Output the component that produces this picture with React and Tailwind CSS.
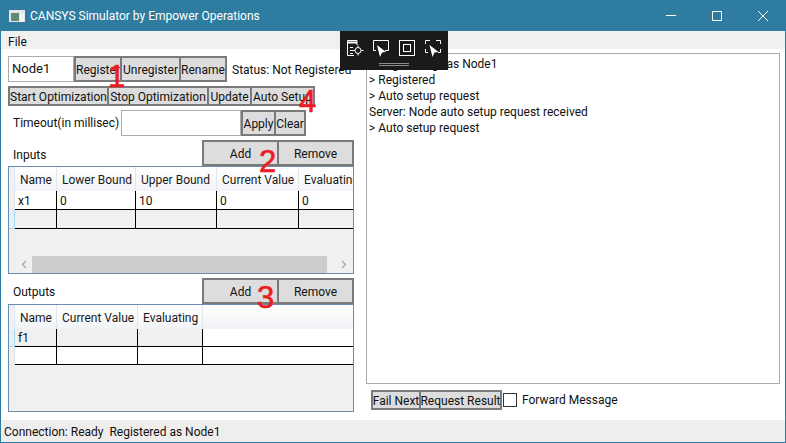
import React from 'react';

const font = "font-['Roboto',sans-serif]";

const Btn = ({ className = '', children }) => (
  <button className={`shrink-0 flex items-center justify-center pt-px bg-[#dddddd] border-2 border-[#7a7a7a] text-[12px] leading-none text-[#111] whitespace-nowrap ${className}`}>
    {children}
  </button>
);

const Mark = ({ className = '', children }) => (
  <span className={`absolute font-['Liberation_Sans',sans-serif] text-[31px] leading-none text-[#ed1c24] [-webkit-text-stroke:0.6px_#ed1c24] ${className}`}>
    {children}
  </span>
);

const DataGrid = ({ columns, rows, tint, scroll, rowClass, className = '' }) => (
  <div className={`relative flex flex-col h-[108px] bg-[#f0f0f0] border border-[#688caf] overflow-hidden ${className}`}>
    <div className="flex items-stretch shrink-0 h-[24px]">
      <div className="w-[6px] shrink-0 bg-[#eef1f5] border-r border-[#e3e6ea]" />
      {columns.map((c) => (
        <div
          key={c.name}
          style={{ width: c.w }}
          className="shrink-0 flex items-center pl-[5px] pt-[2px] bg-gradient-to-b from-white to-[#f1f3f6] border-r border-[#e3e6ea] text-[12px] text-[#1a1a1a] whitespace-nowrap overflow-hidden"
        >
          {c.name}
        </div>
      ))}
      <div className="flex-1 bg-gradient-to-b from-white to-[#f1f3f6]" />
    </div>
    {rows.map((r, i) => (
      <div key={i} className={`flex shrink-0 text-[12px] text-[#111] ${rowClass}`}>
        <div className={`w-[6px] shrink-0 border-b border-r ${i === tint.selector ? 'bg-[#e3f1fb] border-[#a8d4f0]' : 'bg-[#f0f0f0] border-[#e3e6ea]'}`} />
        {columns.map((c, j) => (
          <div
            key={c.name}
            style={{ width: c.w }}
            className={`shrink-0 flex items-center pl-[3px] pt-px border-b border-r border-black ${i === tint.row ? 'bg-[#f0f0f0]' : 'bg-white'}`}
          >
            {r[j]}
          </div>
        ))}
        <div className={`flex-1 border-b border-black ${scroll ? 'bg-[#f0f0f0]' : 'bg-white'}`} />
      </div>
    ))}
    {scroll && (
      <div className="absolute left-0 right-0 bottom-0 h-[17px] flex items-center bg-[#f0f0f0]">
        <svg width="23" height="17" viewBox="0 0 23 17" className="shrink-0">
          <path d="M17 5 L13.500 8.500 L17 12" fill="none" stroke="#a3a3a3" strokeWidth="1.2" />
        </svg>
        <div className="flex-1 h-[17px] bg-[#cdcdcd]" />
        <svg width="26" height="17" viewBox="0 0 26 17" className="shrink-0">
          <path d="M15 5 L18.500 8.500 L15 12" fill="none" stroke="#a3a3a3" strokeWidth="1.2" />
        </svg>
      </div>
    )}
  </div>
);

const inputCols = [
  { name: 'Name', w: 42 },
  { name: 'Lower Bound', w: 79 },
  { name: 'Upper Bound', w: 81 },
  { name: 'Current Value', w: 82 },
  { name: 'Evaluating', w: 60 },
];

const outputCols = [
  { name: 'Name', w: 42 },
  { name: 'Current Value', w: 81 },
  { name: 'Evaluating', w: 65 },
];

const GameBar = () => (
  <div className="absolute left-[339px] top-[31px] w-[108px] h-[39px] bg-[#1a1a1a]">
    <svg width="108" height="39" viewBox="0 0 108 39" fill="none" stroke="#fff" strokeWidth="1">
      {/* capture settings */}
      <path d="M14 24.500H7.500V9.500H17V14" />
      <path d="M7 11.500H17" strokeWidth="2" />
      <path d="M10 16.500h3M10 19.500h3M10 22.500h3" />
      <circle cx="18" cy="19.500" r="3" />
      <path d="M18 14.500v2M18 22.500v2M13 19.500h2M21 19.500h2.500" />
      {/* window capture */}
      <path d="M36 19.500H33.500V9.500H48.500V19.500H45" />
      <path d="M37 14l9 7-4 .5-2 4.500z" fill="#fff" stroke="none" />
      {/* full screen */}
      <rect x="59.500" y="9.500" width="15" height="15" />
      <rect x="63.500" y="13.500" width="7" height="7" />
      {/* region capture */}
      <path d="M85.500 13V9.500H90M96 9.500h4.500V13M85.500 18v3.500H88M100.500 18v3.500H98" />
      <path d="M89.500 14l9 7-4 .5-2 4.500z" fill="#fff" stroke="none" />
      {/* drag handle */}
      <path d="M39 32.500h30M39 34.500h30" stroke="#8a8a8a" />
    </svg>
  </div>
);

export default function App() {
  return (
    <div className={`relative w-[786px] h-[443px] flex flex-col bg-white border-x border-b border-[#2e7c9f] text-[12px] text-[#111] overflow-hidden ${font}`}>
      {/* title bar */}
      <div className="h-[31px] shrink-0 -mx-px flex items-center bg-[#2e7c9f] text-white">
        <svg width="16" height="12" viewBox="0 0 16 12" className="ml-[9px] mr-[5px] shrink-0">
          <rect width="16" height="12" fill="#e6e6e6" />
          <rect x="2" y="3" width="8" height="8" fill="#5f8a78" />
          <rect x="11" y="3" width="4" height="8" fill="#f4f4f4" />
        </svg>
        <span className="text-[12px]">CANSYS Simulator by Empower Operations</span>
        <div className="ml-auto flex h-full">
          <div className="w-[46px] flex items-center justify-center">
            <div className="w-[10px] h-px bg-white" />
          </div>
          <div className="w-[46px] flex items-center justify-center">
            <div className="w-[10px] h-[10px] border border-white" />
          </div>
          <div className="w-[46px] flex items-center justify-center">
            <svg width="10" height="10" viewBox="0 0 10 10" stroke="#fff">
              <path d="M0 0L10 10M10 0L0 10" />
            </svg>
          </div>
        </div>
      </div>

      {/* menu */}
      <div className="h-[18px] shrink-0 flex items-center pl-[7px] pt-[3px] bg-[#f0f0f0]">File</div>

      {/* body */}
      <div className="flex-1 flex pl-[7px] pr-[5px]">
        <div className="w-[346px] shrink-0 pt-[7px]">
          <div className="flex h-[26px]">
            <div className="w-[66px] shrink-0 border border-[#ababab] pl-[3px] pt-[2px] leading-[19px] text-[13px]">Node1</div>
            <Btn className="w-[48px]">Register</Btn>
            <Btn className="w-[61px] -ml-[2px]">Unregister</Btn>
            <Btn className="w-[48px] -ml-[2px]">Rename</Btn>
            <span className="ml-[5px] pt-[2px] self-center whitespace-nowrap">Status: Not Registered</span>
          </div>
          <div className="flex h-[20px] mt-[4px]">
            <Btn className="w-[101px]">Start Optimization</Btn>
            <Btn className="w-[102px] -ml-[2px]">Stop Optimization</Btn>
            <Btn className="w-[45px] -ml-[2px]">Update</Btn>
            <Btn className="w-[65px] -ml-[2px]">Auto Setup</Btn>
          </div>
          <div className="flex h-[26px] mt-[4px]">
            <span className="w-[113px] shrink-0 pl-[5px] self-center whitespace-nowrap">Timeout(in millisec)</span>
            <div className="w-[120px] shrink-0 border border-[#ababab]" />
            <Btn className="w-[35px]">Apply</Btn>
            <Btn className="w-[32px] -ml-[2px]">Clear</Btn>
          </div>
          <div className="flex h-[26px] mt-[4px] items-center">
            <span className="pl-[5px] pt-[3px]">Inputs</span>
            <Btn className="w-[77px] ml-auto h-full">Add</Btn>
            <Btn className="w-[77px] -ml-[2px] h-full">Remove</Btn>
          </div>
          <DataGrid
            columns={inputCols}
            rows={[['x1', '0', '10', '0', '0'], ['', '', '', '', '']]}
            tint={{ row: 1, selector: 1 }}
            rowClass="h-[19px]"
            scroll
          />
          <div className="flex h-[26px] mt-[4px] items-center">
            <span className="pl-[5px] pt-[2px]">Outputs</span>
            <Btn className="w-[77px] ml-auto h-full">Add</Btn>
            <Btn className="w-[77px] -ml-[2px] h-full">Remove</Btn>
          </div>
          <DataGrid
            columns={outputCols}
            rows={[['f1', '', ''], ['', '', '']]}
            tint={{ row: 0, selector: 0 }}
            rowClass="h-[18px]"
          />
        </div>

        <div className="flex-1 ml-[12px] pt-[4px]">
          <div className="h-[331px] border border-[#ababab] pl-[2px] pt-[2px] text-[12px] leading-[16px]">
            <div>&gt; Registering <span className="ml-[5px]">as Node1</span></div>
            <div>&gt; Registered</div>
            <div>&gt; Auto setup request</div>
            <div>Server: Node auto setup request received</div>
            <div>&gt; Auto setup request</div>
          </div>
          <div className="flex h-[20px] mt-[6px] ml-[5px] items-center">
            <Btn className="w-[50px] h-full">Fail Next</Btn>
            <Btn className="w-[83px] -ml-[2px] h-full">Request Result</Btn>
            <div className="w-[14px] h-[14px] shrink-0 ml-px border border-[#333] bg-white" />
            <span className="ml-[5px]">Forward Message</span>
          </div>
        </div>
      </div>

      {/* status bar */}
      <div className="h-[22px] shrink-0 flex items-center pl-[3px] pt-px bg-[#f0eded] whitespace-pre">Connection: Ready  Registered as Node1</div>

      <GameBar />
      <Mark className="left-[107px] top-[61px]">1</Mark>
      <Mark className="left-[258px] top-[146px]">2</Mark>
      <Mark className="left-[256px] top-[282px]">3</Mark>
      <Mark className="left-[298px] top-[86px]">4</Mark>
    </div>
  );
}
